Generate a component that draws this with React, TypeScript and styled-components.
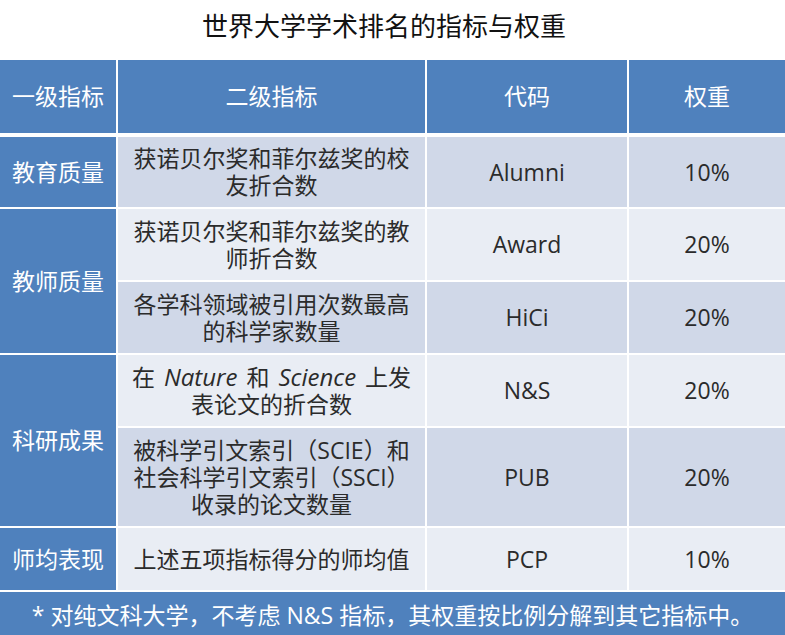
import React from "react";
import styled, { createGlobalStyle, css } from "styled-components";

const GlobalStyle = createGlobalStyle`
  html, body { margin: 0; padding: 0; background: #ffffff; }
  body {
    font-family: "Open Sans", "Noto Sans CJK SC", "Noto Sans", sans-serif;
    width: 785px;
  }
`;

const Page = styled.div`
  width: 785px;
  height: 635px;
  display: flex;
  flex-direction: column;
  overflow: hidden;
`;

const Title = styled.h1`
  margin: 0;
  height: 60px;
  box-sizing: border-box;
  padding: 0 17px 12px 0;
  display: flex;
  align-items: center;
  justify-content: center;
  font-family: "Noto Sans CJK SC", sans-serif;
  font-weight: 400;
  font-size: 26px;
  color: #111111;
`;

const Grid = styled.div`
  display: grid;
  grid-template-columns: 116px 307px 200px 1fr;
  grid-template-rows: 75px 70px 71px 71px 71px 98px 62px 43px;
  gap: 2px;
  background: #ffffff;
`;

const Cell = styled.div<{ $kind: "head" | "cat" | "dark" | "light"; $span?: number }>`
  display: flex;
  align-items: center;
  justify-content: center;
  text-align: center;
  font-size: 23px;
  line-height: 27px;
  box-sizing: border-box;
  padding: 0 6px;
  ${(p) => p.$span && css`grid-row: span ${p.$span};`}
  ${(p) =>
    p.$kind === "head"
      ? css`
          background: #4f81bd;
          color: #ffffff;
          margin-bottom: 2px;
        `
      : p.$kind === "cat"
      ? css`
          background: #4f81bd;
          color: #ffffff;
        `
      : p.$kind === "dark"
      ? css`
          background: #d0d8e8;
          color: #2b2b2b;
        `
      : css`
          background: #e9edf4;
          color: #2b2b2b;
        `}
`;

const Em = styled.i`
  font-style: italic;
  font-size: 24px;
  margin: 0 3px;
`;

const Footer = styled.div`
  grid-column: 1 / -1;
  background: #4f81bd;
  color: #ffffff;
  font-size: 23px;
  display: flex;
  align-items: center;
  justify-content: center;
  white-space: nowrap;
`;

type Row = {
  cat?: { text: string; span: number };
  desc: React.ReactNode;
  code: string;
  weight: string;
};

const rows: Row[] = [
  {
    cat: { text: "教育质量", span: 1 },
    desc: (
      <>
        获诺贝尔奖和菲尔兹奖的校
        <br />
        友折合数
      </>
    ),
    code: "Alumni",
    weight: "10%",
  },
  {
    cat: { text: "教师质量", span: 2 },
    desc: (
      <>
        获诺贝尔奖和菲尔兹奖的教
        <br />
        师折合数
      </>
    ),
    code: "Award",
    weight: "20%",
  },
  {
    desc: (
      <>
        各学科领域被引用次数最高
        <br />
        的科学家数量
      </>
    ),
    code: "HiCi",
    weight: "20%",
  },
  {
    cat: { text: "科研成果", span: 2 },
    desc: (
      <>
        在 <Em>Nature</Em> 和 <Em>Science</Em> 上发
        <br />
        表论文的折合数
      </>
    ),
    code: "N&S",
    weight: "20%",
  },
  {
    desc: (
      <>
        被科学引文索引（SCIE）和
        <br />
        社会科学引文索引（SSCI）
        <br />
        收录的论文数量
      </>
    ),
    code: "PUB",
    weight: "20%",
  },
  {
    cat: { text: "师均表现", span: 1 },
    desc: <>上述五项指标得分的师均值</>,
    code: "PCP",
    weight: "10%",
  },
];

export default function App() {
  return (
    <Page>
      <GlobalStyle />
      <Title>世界大学学术排名的指标与权重</Title>
      <Grid>
        <Cell $kind="head">一级指标</Cell>
        <Cell $kind="head">二级指标</Cell>
        <Cell $kind="head">代码</Cell>
        <Cell $kind="head">权重</Cell>
        {rows.map((r, i) => {
          const shade = i % 2 === 0 ? "dark" : "light";
          return (
            <React.Fragment key={r.code}>
              {r.cat && (
                <Cell $kind="cat" $span={r.cat.span > 1 ? r.cat.span : undefined}>
                  {r.cat.text}
                </Cell>
              )}
              <Cell $kind={shade}>
                <span>{r.desc}</span>
              </Cell>
              <Cell $kind={shade}>{r.code}</Cell>
              <Cell $kind={shade}>{r.weight}</Cell>
            </React.Fragment>
          );
        })}
        <Footer>* 对纯文科大学，不考虑 N&amp;S 指标，其权重按比例分解到其它指标中。</Footer>
      </Grid>
    </Page>
  );
}
